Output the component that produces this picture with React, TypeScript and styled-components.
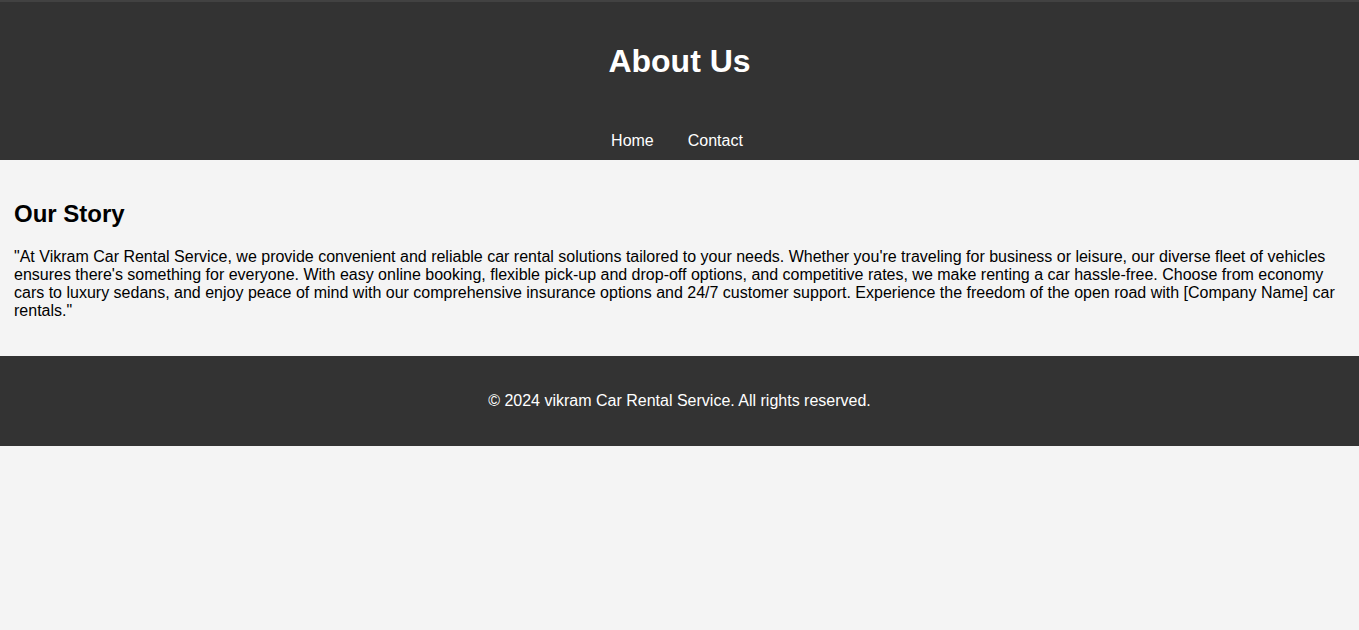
import React from "react";
import styled, { createGlobalStyle } from "styled-components";

const GlobalStyle = createGlobalStyle`
  html, body {
    margin: 0;
    padding: 0;
    background: #f4f4f4;
    font-family: Arial, "Liberation Sans", Helvetica, sans-serif;
    font-size: 16px;
  }
`;

const Header = styled.header`
  background: #333333;
  color: #ffffff;
  text-align: center;
  padding: 22px 0 10px;
  box-shadow: inset 0 2px 0 #424242;
`;

const Title = styled.h1`
  font-size: 32px;
  font-weight: bold;
  margin: 21.44px 0;
`;

const Nav = styled.nav`
  display: flex;
  justify-content: center;
  gap: 34px;
  margin-top: 51.6px;
  padding-right: 5px;
`;

const NavLink = styled.a`
  color: #ffffff;
  text-decoration: none;
  font-size: 16px;
  line-height: 18.4px;
`;

const Main = styled.main`
  padding: 20px 14px;
  color: #000000;
`;

const SectionTitle = styled.h2`
  font-size: 24px;
  font-weight: bold;
  margin: 19.92px 0;
`;

const Paragraph = styled.p`
  margin: 16px 0;
  font-size: 16px;
  line-height: 18px;
`;

const Footer = styled.footer`
  background: #333333;
  color: #ffffff;
  text-align: center;
  padding: 20px 0;
`;

const FooterText = styled.p`
  margin: 16px 0;
  line-height: 18px;
`;

export default function App() {
  return (
    <>
      <GlobalStyle />
      <Header>
        <Title>About Us</Title>
        <Nav>
          <NavLink href="#">Home</NavLink>
          <NavLink href="#">Contact</NavLink>
        </Nav>
      </Header>
      <Main>
        <SectionTitle>Our Story</SectionTitle>
        <Paragraph>
          "At Vikram Car Rental Service, we provide convenient and reliable car rental solutions tailored to your needs. Whether you're traveling for business or leisure, our diverse fleet of vehicles ensures there's something for everyone. With easy online booking, flexible pick-up and drop-off options, and competitive rates, we make renting a car hassle-free. Choose from economy cars to luxury sedans, and enjoy peace of mind with our comprehensive insurance options and 24/7 customer support. Experience the freedom of the open road with [Company Name] car rentals."
        </Paragraph>
      </Main>
      <Footer>
        <FooterText>© 2024 vikram Car Rental Service. All rights reserved.</FooterText>
      </Footer>
    </>
  );
}
